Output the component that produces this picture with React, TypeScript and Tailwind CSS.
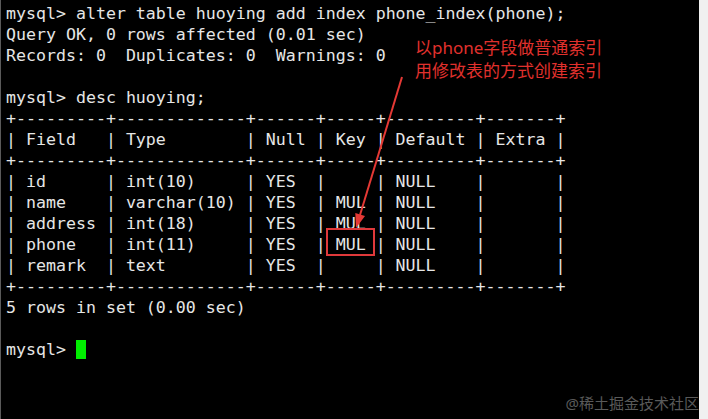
const lines = [
  "mysql> alter table huoying add index phone_index(phone);",
  "Query OK, 0 rows affected (0.01 sec)",
  "Records: 0  Duplicates: 0  Warnings: 0",
  "",
  "mysql> desc huoying;",
  "+---------+-------------+------+-----+---------+-------+",
  "| Field   | Type        | Null | Key | Default | Extra |",
  "+---------+-------------+------+-----+---------+-------+",
  "| id      | int(10)     | YES  |     | NULL    |       |",
  "| name    | varchar(10) | YES  | MUL | NULL    |       |",
  "| address | int(18)     | YES  | MUL | NULL    |       |",
  "| phone   | int(11)     | YES  | MUL | NULL    |       |",
  "| remark  | text        | YES  |     | NULL    |       |",
  "+---------+-------------+------+-----+---------+-------+",
  "5 rows in set (0.00 sec)",
  "",
];

const App = () => {
  return (
    <div className="flex h-[419px] w-[708px] overflow-hidden bg-black">
      <div className="relative flex-1 border-l border-[#5a5a5a] bg-black">
        <pre className="pl-[5px] pt-[3px] font-['DejaVu_Sans_Mono',monospace] text-[16.6px] leading-[21px] text-[#e6e6e6] whitespace-pre">
          {lines.map((line, i) => (
            <div key={i}>{line === "" ? " " : line}</div>
          ))}
          <div>
            mysql&gt; <span className="bg-[#00ee00]"> </span>
          </div>
        </pre>

        {/* annotation */}
        <div className="absolute left-[414px] top-[36px] font-['Noto_Sans','Noto_Sans_CJK_SC',sans-serif] text-[17px] leading-[23px] text-[#e0312d]">
          <div>以phone字段做普通索引</div>
          <div>用修改表的方式创建索引</div>
        </div>

        {/* box around MUL */}
        <div className="absolute left-[325px] top-[228px] h-[28px] w-[49px] border-2 border-[#e0393b]" />

        {/* arrow */}
        <svg className="absolute left-[-1px] top-0" width="700" height="419">
          <line x1="402" y1="77" x2="360" y2="215" stroke="#e53935" strokeWidth="2" />
          <polygon points="356,228 365,216 355.3,213" fill="#e53935" />
        </svg>

        {/* watermark */}
        <div className="absolute right-0 top-[393px] font-['Noto_Sans','Noto_Sans_CJK_SC',sans-serif] text-[15px] leading-[20px] text-[#5a5a5a]">
          @稀土掘金技术社区
        </div>
      </div>
      <div className="w-[9px] bg-[#f0f0f0]" />
    </div>
  );
};

export default App;
